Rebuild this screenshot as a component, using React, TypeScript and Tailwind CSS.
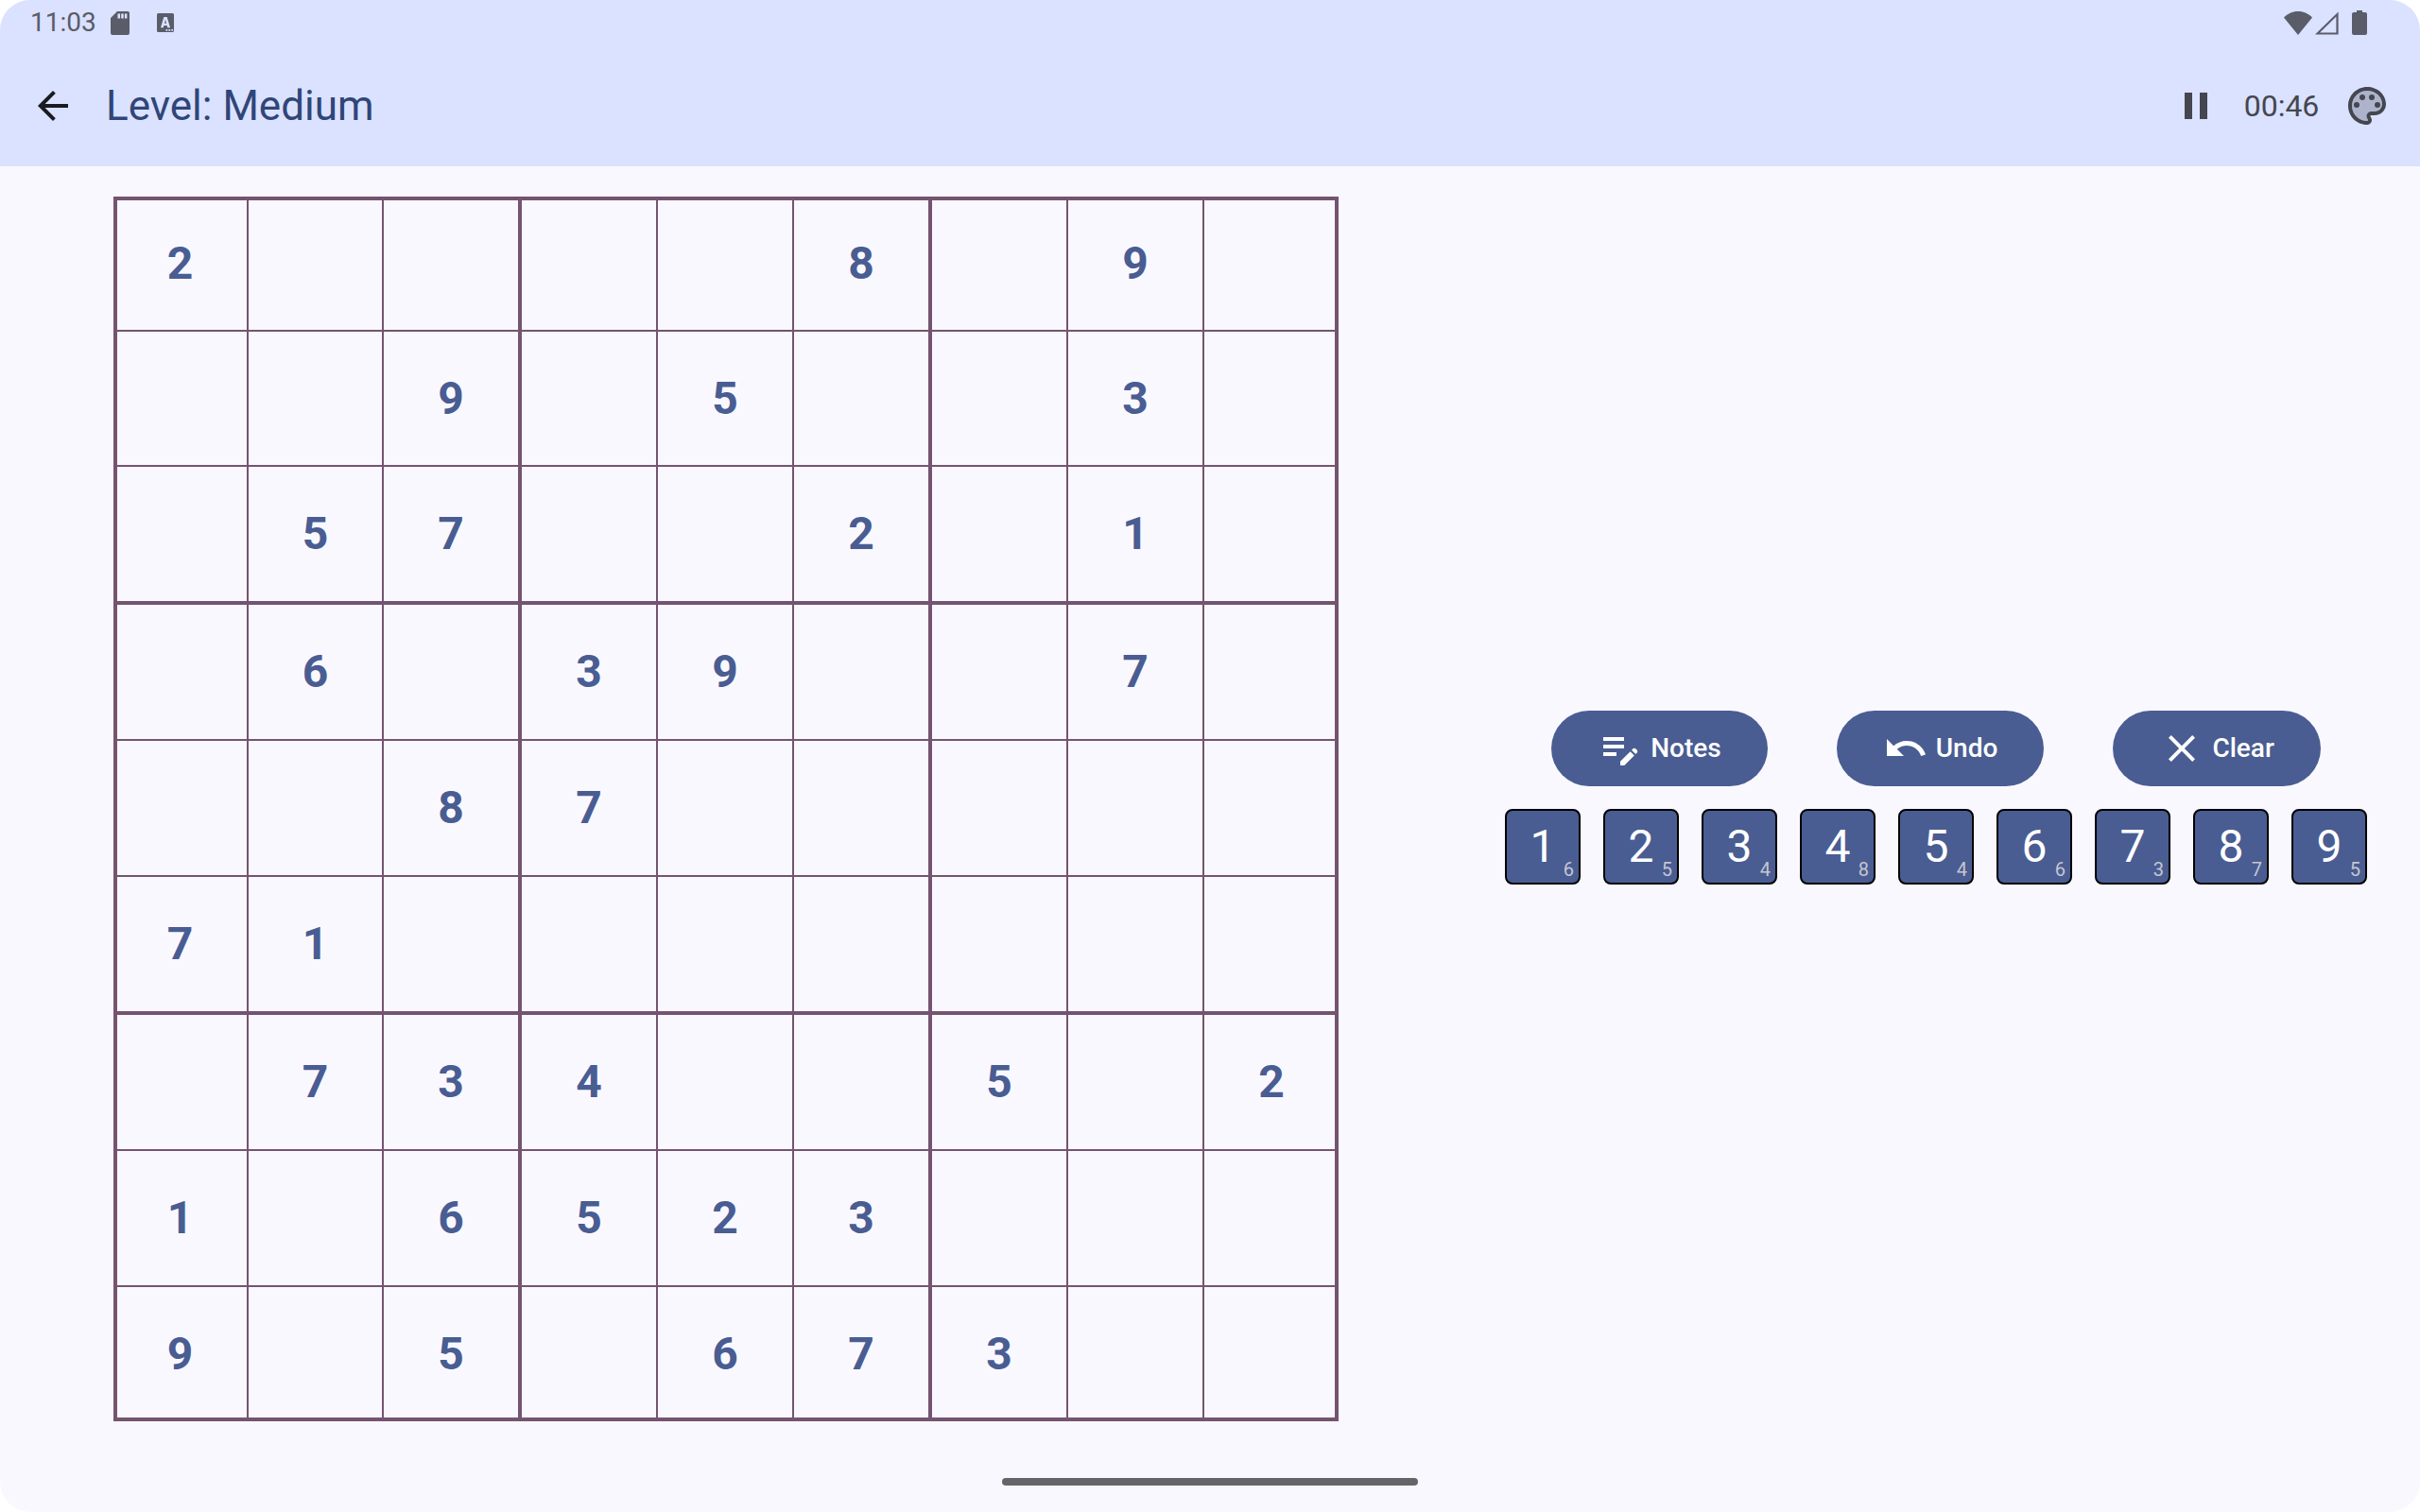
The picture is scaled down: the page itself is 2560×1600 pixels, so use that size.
import React from "react";

const BOARD = [
  "2....8.9.",
  "..9.5..3.",
  ".57..2.1.",
  ".6.39..7.",
  "..87.....",
  "71.......",
  ".734..5.2",
  "1.6523...",
  "9.5.673..",
];

const REMAINING = [6, 5, 4, 8, 4, 6, 3, 7, 5];

function Icon({ children }: { children: React.ReactNode }) {
  return (
    <svg viewBox="0 0 24 24" className="size-12 shrink-0" fill="currentColor" aria-hidden="true">
      {children}
    </svg>
  );
}

function StatusBar() {
  return (
    <div className="flex h-12 items-center justify-between pr-14 pl-8 text-[#5a5c69]">
      <div className="flex items-center">
        <span className="w-[85px] text-[28px] leading-8">11:03</span>
        <svg viewBox="0 0 20 25" className="h-[25px] w-5" fill="currentColor" aria-label="SD card">
          <path
            fillRule="evenodd"
            d="M7 0h11a2 2 0 0 1 2 2v21a2 2 0 0 1-2 2H2a2 2 0 0 1-2-2V7zM7.500 2.500v5h2.500v-5zm3.700 0v5h2.500v-5zm3.700 0v5h2.500v-5z"
          />
        </svg>
        <svg viewBox="0 0 18 20" className="ml-[29px] h-5 w-[18px]" fill="currentColor" aria-label="Keyboard">
          <path
            fillRule="evenodd"
            d="M1.500 0h15A1.500 1.500 0 0 1 18 1.500v17a1.500 1.500 0 0 1-1.500 1.500h-15A1.500 1.500 0 0 1 0 18.500v-17A1.500 1.500 0 0 1 1.500 0zM7.300 4 4 15.200h2.800l.6-2.200h3.200l.6 2.200H14L10.700 4zM9 6.800l1 3.900H8zM9.500 17v1.800h1.800V17zm2.900 0v1.800h1.800V17zm2.900 0v1.800h1.800V17z"
          />
        </svg>
      </div>
      <div className="flex items-center">
        <svg viewBox="0 0 30 25" className="h-[25px] w-[30px]" fill="currentColor" aria-label="Wi-Fi">
          <path d="M15 25 0 6.500C4 2.500 9 0 15 0s11 2.500 15 6.500z" />
        </svg>
        <svg viewBox="0 0 25 25" className="ml-[3px] size-[25px]" fill="none" stroke="currentColor" strokeWidth="2.200" aria-label="Signal">
          <path d="M2.500 23.500H23.500V3z" />
        </svg>
        <svg viewBox="0 0 16 26" className="ml-3.5 h-[26px] w-4" fill="currentColor" aria-label="Battery">
          <path d="M5 0h6v2h3a2 2 0 0 1 2 2v20a2 2 0 0 1-2 2H2a2 2 0 0 1-2-2V4a2 2 0 0 1 2-2h3z" />
        </svg>
      </div>
    </div>
  );
}

function AppBar() {
  return (
    <div className="flex h-32 items-center px-2">
      <button aria-label="Back" className="grid size-24 place-items-center text-[#1a1b21]">
        <Icon>
          <path d="M20 11H7.830l5.590-5.590L12 4l-8 8 8 8 1.410-1.410L7.830 13H20v-2z" />
        </Icon>
      </button>
      <h1 className="ml-2 flex-1 text-[44px] leading-[56px] text-[#304578]">Level: Medium</h1>
      <button aria-label="Pause" className="grid size-24 place-items-center text-[#45464f]">
        <Icon>
          <path d="M6 19h4V5H6v14zm8-14v14h4V5h-4z" />
        </Icon>
      </button>
      <span className="w-[85px] text-center text-[32px] leading-12 text-[#45464f]">00:46</span>
      <button aria-label="Theme" className="grid size-24 place-items-center text-[#45464f]">
        <Icon>
          <path
            opacity=".3"
            d="M12 4c-4.410 0-8 3.590-8 8s3.590 8 8 8c.28 0 .5-.22.5-.5 0-.16-.08-.28-.14-.35-.41-.46-.63-1.050-.63-1.650 0-1.380 1.120-2.500 2.500-2.500H16c2.210 0 4-1.790 4-4 0-3.860-3.590-7-8-7z"
          />
          <path d="M12 2C6.490 2 2 6.490 2 12s4.490 10 10 10c1.380 0 2.500-1.120 2.500-2.500 0-.61-.23-1.210-.64-1.670-.08-.09-.13-.21-.13-.33 0-.28.22-.5.5-.5H16c3.310 0 6-2.690 6-6 0-4.960-4.490-9-10-9zm4 13h-1.770c-1.380 0-2.500 1.120-2.500 2.500 0 .61.22 1.190.63 1.650.06.07.14.19.14.35 0 .28-.22.5-.5.5-4.410 0-8-3.590-8-8s3.590-8 8-8 8 3.140 8 7c0 2.210-1.790 4-4 4z" />
          <circle cx="6.500" cy="11.500" r="1.500" />
          <circle cx="9.500" cy="7.500" r="1.500" />
          <circle cx="14.500" cy="7.500" r="1.500" />
          <circle cx="17.500" cy="11.500" r="1.500" />
        </Icon>
      </button>
    </div>
  );
}

const edge = (i: number) => (i === 8 ? 0 : i % 3 === 2 ? 2 : 1);
const RIGHT = ["border-r-0", "border-r-2", "border-r-4"];
const BOTTOM = ["border-b-0", "border-b-2", "border-b-4"];

function Board() {
  return (
    <div className="relative grid aspect-square w-full max-w-[1296px] grid-cols-[143fr_143fr_146fr_144fr_144fr_146fr_144fr_144fr_142fr] grid-rows-[143fr_143fr_146fr_144fr_144fr_146fr_144fr_144fr_142fr]">
      {BOARD.flatMap((row, r) =>
        [...row].map((n, c) => (
          <button
            key={`${r}-${c}`}
            aria-label={`Row ${r + 1}, column ${c + 1}`}
            className={`flex min-h-0 min-w-0 items-center justify-center border-[#745470] text-[48px] leading-none font-bold text-[#495d92] ${RIGHT[edge(c)]} ${BOTTOM[edge(r)]}`}
          >
            {n === "." ? "" : n}
          </button>
        )),
      )}
      <div className="pointer-events-none absolute inset-0 border-4 border-[#745470]" />
    </div>
  );
}

function Action({ label, children }: { label: string; children: React.ReactNode }) {
  return (
    <button className="flex h-20 items-center gap-2 rounded-full bg-[#495d92] px-[49px] text-[28px] leading-10 font-medium text-white">
      <Icon>{children}</Icon>
      {label}
    </button>
  );
}

function Controls() {
  return (
    <div className="flex w-full flex-col items-center gap-6 px-8 pb-6">
      <div className="flex w-full justify-evenly">
        <Action label="Notes">
          <path d="M3 10h11v2H3v-2zm0-2h11V6H3v2zm0 8h7v-2H3v2zm15.010-3.130.71-.71c.39-.39 1.020-.39 1.410 0l.71.71c.39.39.39 1.020 0 1.410l-.71.71-2.120-2.120zm-.71.71-5.300 5.300V21h2.120l5.300-5.300-2.120-2.120z" />
        </Action>
        <Action label="Undo">
          <path d="M12.500 8c-2.650 0-5.050.99-6.900 2.600L2 7v9h9l-3.620-3.620c1.390-1.160 3.160-1.880 5.120-1.880 3.540 0 6.550 2.310 7.600 5.500l2.370-.78C21.080 11.030 17.150 8 12.500 8z" />
        </Action>
        <Action label="Clear">
          <path d="M19 6.410 17.590 5 12 10.590 6.410 5 5 6.410 10.590 12 5 17.590 6.410 19 12 13.410 17.590 19 19 17.590 13.410 12z" />
        </Action>
      </div>
      <div className="flex gap-6">
        {REMAINING.map((left, i) => (
          <button
            key={i}
            className="relative grid size-20 place-items-center rounded-lg border-2 border-black bg-[#495d92] text-[48px] leading-none text-white"
          >
            {i + 1}
            <span className="absolute right-[5px] bottom-0.5 text-xl leading-6 text-[#c5c6d0]">{left}</span>
          </button>
        ))}
      </div>
    </div>
  );
}

export default function App() {
  return (
    <div className="min-h-screen bg-white font-['Roboto',sans-serif]">
      <div className="flex min-h-screen flex-col overflow-hidden rounded-[32px] bg-[#faf8ff]">
        <header className="bg-[#dae2ff]">
          <StatusBar />
          <AppBar />
        </header>
        <main className="flex flex-1">
          <section className="flex w-3/5 items-center justify-center p-8">
            <Board />
          </section>
          <section className="flex w-2/5 items-center">
            <Controls />
          </section>
        </main>
        <footer className="flex h-16 items-center justify-center">
          <div className="h-2 w-[440px] rounded-full bg-[#656567]" />
        </footer>
      </div>
    </div>
  );
}
